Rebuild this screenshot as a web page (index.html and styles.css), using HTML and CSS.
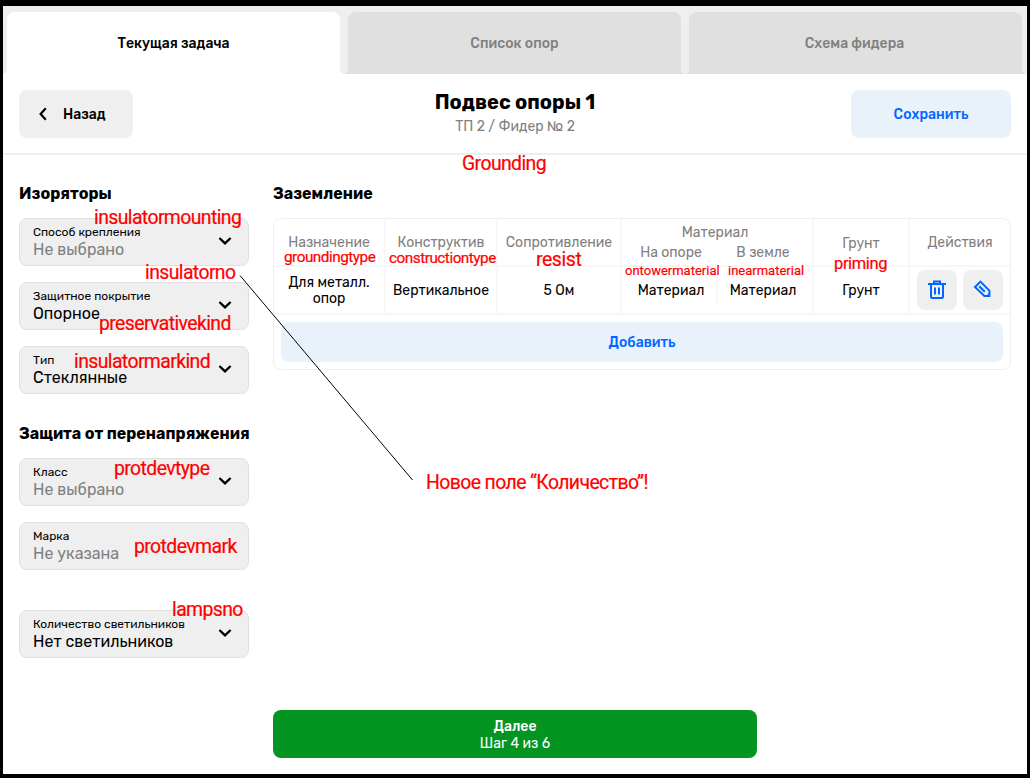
FILE: index.html
```html
<!DOCTYPE html>
<html lang="ru">
<head>
<meta charset="utf-8">
<title>Подвес опоры 1</title>
<link rel="stylesheet" href="styles.css">
</head>
<body>
<div class="app">
  <nav class="tabs">
    <div class="tab tab-active"><span>Текущая задача</span></div>
    <div class="tab"><span>Список опор</span></div>
    <div class="tab"><span>Схема фидера</span></div>
  </nav>
  <header class="header">
    <button class="btn btn-back"><svg width="8" height="14" viewBox="0 0 8 14"><path d="M6.8 1.3 L1.6 7 L6.8 12.7"/></svg><span>Назад</span></button>
    <div class="titles"><h1>Подвес опоры 1</h1><p>ТП 2 / Фидер № 2</p></div>
    <button class="btn btn-save"><span>Сохранить</span></button>
  </header>
  <main class="main">
    <aside class="side">
      <h2>Изоряторы</h2>
      <div class="field"><div><label>Способ крепления</label><p class="muted">Не выбрано</p></div><svg class="chev" width="14" height="8" viewBox="0 0 14 8"><path d="M1.4 1 L7 6.4 L12.6 1"/></svg></div>
      <div class="field"><div><label>Защитное покрытие</label><p>Опорное</p></div><svg class="chev" width="14" height="8" viewBox="0 0 14 8"><path d="M1.4 1 L7 6.4 L12.6 1"/></svg></div>
      <div class="field"><div><label>Тип</label><p>Стеклянные</p></div><svg class="chev" width="14" height="8" viewBox="0 0 14 8"><path d="M1.4 1 L7 6.4 L12.6 1"/></svg></div>
      <h2 class="second">Защита от перенапряжения</h2>
      <div class="field"><div><label>Класс</label><p class="muted">Не выбрано</p></div><svg class="chev" width="14" height="8" viewBox="0 0 14 8"><path d="M1.4 1 L7 6.4 L12.6 1"/></svg></div>
      <div class="field"><div><label>Марка</label><p class="muted">Не указана</p></div></div>
      <div class="field lamps"><div><label>Количество светильников</label><p>Нет светильников</p></div><svg class="chev" width="14" height="8" viewBox="0 0 14 8"><path d="M1.4 1 L7 6.4 L12.6 1"/></svg></div>
    </aside>
    <section class="content">
      <h2>Заземление</h2>
      <div class="table">
        <div class="row head">
          <div class="cell">Назначение</div>
          <div class="cell">Конструктив</div>
          <div class="cell">Сопротивление</div>
          <div class="cell group"><span class="group-title">Материал</span><div class="pair"><span>На опоре</span><span>В земле</span></div></div>
          <div class="cell ground">Грунт</div>
          <div class="cell">Действия</div>
        </div>
        <div class="row">
          <div class="cell">Для металл.<br>опор</div>
          <div class="cell">Вертикальное</div>
          <div class="cell">5 Ом</div>
          <div class="cell group"><div class="pair values"><span>Материал</span><span>Материал</span></div></div>
          <div class="cell">Грунт</div>
          <div class="cell actions">
            <button class="icon-btn"><svg width="20" height="20" viewBox="0 0 20 20"><path d="M1 4H19M7 3.5V1.5H13V3.5M4 4V16.5Q4 18 5.5 18H14.5Q16 18 16 16.5V4M8 7.5V14.5M12 7.5V14.5"/></svg></button>
            <button class="icon-btn"><svg width="20" height="20" viewBox="0 0 20 20"><path d="M7.4 1.6 L2 7 L11.4 16 H16.4 V10.6 Z M6.2 6.2 L11.8 11.8"/><path class="tip" d="M12.6 16.6 L16.8 12.4 V16.6Z"/></svg></button>
          </div>
        </div>
        <div class="add-wrap"><button class="btn add"><span>Добавить</span></button></div>
      </div>
      <button class="next"><b>Далее</b><span>Шаг 4 из 6</span></button>
    </section>
  </main>
</div>
<div class="notes">
  <svg class="pointer" width="1030" height="778" viewBox="0 0 1030 778"><path d="M240 275.5 L412.5 480"/></svg>
  <span class="note n-grounding">Grounding</span>
  <span class="note n-mounting">insulatormounting</span>
  <span class="note n-no">insulatorno</span>
  <span class="note n-kind">preservativekind</span>
  <span class="note n-mark">insulatormarkind</span>
  <span class="note n-devtype">protdevtype</span>
  <span class="note n-devmark">protdevmark</span>
  <span class="note n-lamps">lampsno</span>
  <span class="note n-quantity">Новое поле “Количество”!</span>
  <span class="note mid n-gtype">groundingtype</span>
  <span class="note mid n-ctype">constructiontype</span>
  <span class="note n-resist">resist</span>
  <span class="note small n-tower">ontowermaterial</span>
  <span class="note small n-near">inearmaterial</span>
  <span class="note n-priming">priming</span>
</div>
</body>
</html>
```

FILE: styles.css
```css
* { box-sizing: border-box; }
body { margin: 0; width: 1030px; height: 778px; padding: 6px 3px 4px; background: #000; font-family: Rubik, Roboto, "Liberation Sans", sans-serif; color: #000; overflow: hidden; position: relative; }
h1, h2, p { margin: 0; }
button { border: 0; padding: 0; font: inherit; color: inherit; }
svg { display: block; fill: none; stroke: currentColor; }
.app { width: 1024px; height: 768px; background: #fff; display: flex; flex-direction: column; }

.tabs { height: 68px; flex: none; background: #efefef; padding: 6px 4px 0; display: flex; gap: 8px; }
.tab { --c: #e0e0e0; position: relative; width: 333px; flex: none; background: var(--c); border-radius: 8px 8px 0 0; display: flex; align-items: center; justify-content: center; font-size: 14px; font-weight: 500; letter-spacing: .02px; color: #808080; }
.tab-active { --c: #fff; color: #000; }
.tab:last-child { padding-right: 2px; }
.tab::before, .tab::after { content: ""; position: absolute; bottom: 0; width: 4px; height: 4px; }
.tab::before { left: -4px; background: radial-gradient(circle at 0 0, transparent 3.5px, var(--c) 4px); }
.tab::after { right: -4px; background: radial-gradient(circle at 100% 0, transparent 3.5px, var(--c) 4px); }

.header { height: 81px; flex: none; border-bottom: 2px solid #efefef; padding: 0 16px; display: grid; grid-template-columns: 160px 1fr 160px; align-items: center; }
.btn { height: 48px; border-radius: 8px; font-size: 14px; font-weight: 500; letter-spacing: .02px; display: flex; align-items: center; justify-content: center; }
.btn-back { width: 114px; background: #efefef; gap: 16px; justify-content: flex-start; padding-left: 20px; }
.btn-back svg { stroke-width: 2.2; }
.btn-back span, .btn-save span { padding-top: 2px; }
.btn-save { background: #e9f2fa; color: #0066ff; }
.titles { text-align: center; }
h1 { font-size: 20px; line-height: 24px; font-weight: 700; }
.titles p { font-size: 14px; line-height: 20px; padding-top: 3px; margin-bottom: 1px; color: #808080; }

.main { flex: 1; padding: 27px 16px 16px; display: flex; gap: 24px; }
.side { width: 230px; }
h2 { font-size: 16px; line-height: 24px; height: 24px; font-weight: 700; margin-bottom: 12px; white-space: nowrap; }
h2.second { margin-top: 28px; }
.field { height: 48px; margin-bottom: 16px; border: 1px solid #e0e0e0; border-radius: 8px; background: #efefef; padding: 0 16px 0 13px; display: flex; align-items: center; justify-content: space-between; }
.field label { display: block; font-size: 12px; line-height: 16px; }
.field p { font-size: 16px; line-height: 20px; }
.field .muted { color: #808080; }
.chev { stroke-width: 2.3; margin-bottom: 2px; }
.lamps { margin-top: 40px; }

.content { width: 738px; display: flex; flex-direction: column; }
.table { border: 1px solid #efefef; border-radius: 8px; height: 152px; }
.row { display: grid; grid-template-columns: 112px 112px 124px 192px 96px 100px; height: 48px; border-bottom: 2px solid #f7f7f7; font-size: 14px; line-height: 16px; }
.cell { border-right: 2px solid #f7f7f7; padding-top: 2px; display: flex; align-items: center; justify-content: center; text-align: center; white-space: nowrap; }
.cell:last-child { border-right: 0; }
.head { color: #808080; }
.group { flex-direction: column; gap: 4px; }
.group-title { padding-right: 4px; }
.ground { padding-top: 4px; }
.pair { display: grid; grid-template-columns: 96px 94px; }
.pair span:first-child { padding-left: 2px; }
.pair span:last-child { padding-right: 4px; }
.values span { line-height: 28px; }
.values span:first-child { border-right: 2px solid #f7f7f7; padding-left: 4px; }
.cell.actions { gap: 6px; padding-top: 0; }
.icon-btn { width: 40px; height: 40px; border-radius: 8px; background: #efefef; color: #0066ff; display: flex; align-items: center; justify-content: center; }
.icon-btn svg { stroke-width: 2; }
.icon-btn .tip { fill: currentColor; stroke: none; }
.add-wrap { padding: 7px; }
.add { width: 100%; height: 40px; background: #e9f2fa; color: #0066ff; }
.next { margin-top: auto; width: 484px; height: 48px; border-radius: 8px; background: #039422; color: #fff; display: flex; flex-direction: column; align-items: center; justify-content: center; padding-top: 2px; font-size: 14px; line-height: 17px; }
.next b { font-weight: 500; }

.notes { position: absolute; inset: 0; color: #f00; font-family: Roboto, sans-serif; }
.pointer { position: absolute; inset: 0; color: #000; stroke-width: 1; }
.note { position: absolute; font-size: 19.4px; line-height: 22px; letter-spacing: -.59px; white-space: nowrap; -webkit-text-stroke: .2px #f00; }
.mid { font-size: 15.3px; letter-spacing: -.48px; }
.small { font-size: 13px; letter-spacing: 0; }
.n-grounding { left: 462px; top: 153px; }
.n-mounting { left: 94px; top: 207px; }
.n-no { left: 145px; top: 262px; }
.n-kind { left: 99px; top: 313px; }
.n-mark { left: 74px; top: 351px; }
.n-devtype { left: 114px; top: 458px; }
.n-devmark { left: 134px; top: 536px; }
.n-lamps { left: 172px; top: 599px; }
.n-quantity { left: 426px; top: 472px; }
.n-gtype { left: 284px; top: 246px; }
.n-ctype { left: 389px; top: 247px; }
.n-resist { left: 536px; top: 249px; letter-spacing: -.4px; }
.n-tower { left: 625px; top: 260px; }
.n-near { left: 728px; top: 260px; }
.n-priming { left: 834px; top: 253px; font-size: 16.5px; letter-spacing: -.38px; }
```
